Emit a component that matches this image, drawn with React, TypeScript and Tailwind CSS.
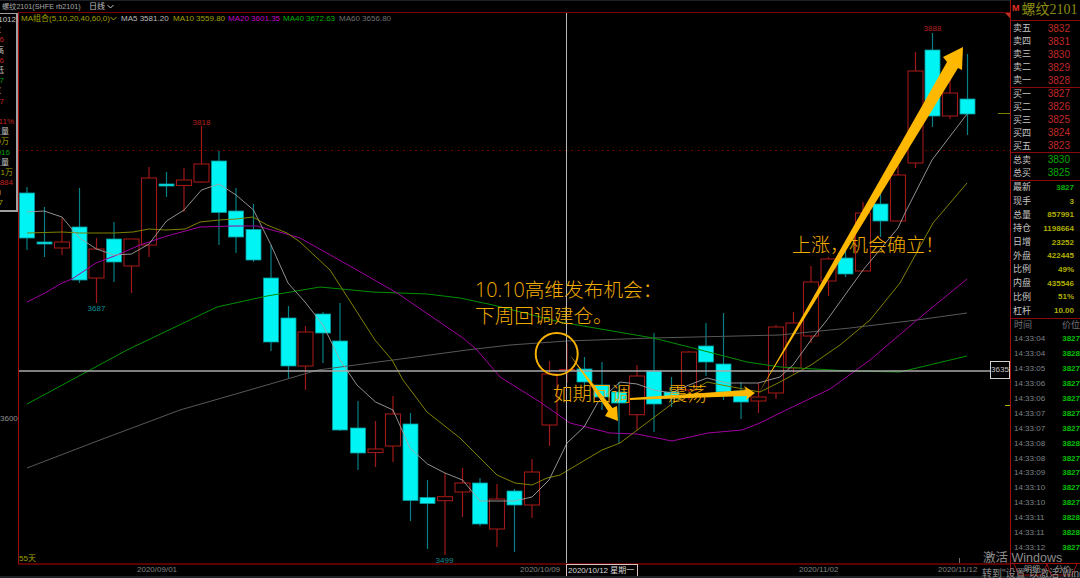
import React from 'react';

// [center x, body top, body bottom, wick top, wick bottom, up?]
const candles: [number, number, number, number, number, boolean][] = [
  [27, 193, 238, 187, 250, false],
  [44.5, 242, 244, 207, 257, false],
  [62, 242, 248, 218, 255, true],
  [79.5, 227, 280, 188, 283, false],
  [96.5, 249, 278, 238, 303, true],
  [114, 239, 262, 222, 282, false],
  [131.5, 239, 266, 239, 293, true],
  [149, 178, 245, 167, 257, true],
  [166.5, 184, 186, 172, 197, false],
  [184, 180, 185.5, 168, 212, true],
  [201.5, 164, 182, 126, 183, true],
  [219, 161, 212.5, 151, 245, false],
  [236, 211, 237, 188, 253, false],
  [253.5, 229.5, 260, 204, 262, false],
  [271, 278, 342, 245, 351, false],
  [288.5, 318, 366, 306, 378, false],
  [305.5, 332, 366, 326, 390, true],
  [323, 314, 333, 312, 363, false],
  [340, 341, 430, 303, 431, false],
  [358, 428, 453, 401, 470, false],
  [375.5, 449, 452.5, 421, 467, true],
  [393, 414, 446, 396, 462, true],
  [410.5, 424, 500.5, 413, 521, false],
  [427.5, 497.5, 503.5, 480, 549, false],
  [445, 496.7, 500.7, 473, 555, true],
  [462.5, 483, 492, 468, 517, true],
  [480, 483, 524, 478, 526, false],
  [497, 499, 529, 484, 547, true],
  [514.5, 491, 505, 489, 552, false],
  [532, 472, 505, 459, 518, true],
  [549.5, 374, 425, 361, 446, true],
  [567, 369.5, 370.5, 343, 383, true],
  [584.5, 369, 382, 357, 387, false],
  [602, 385, 397, 362, 410, false],
  [619, 392, 403, 382, 443, false],
  [637, 376, 414.7, 365, 430, true],
  [654, 371, 404, 333, 432, false],
  [671.5, 392, 398, 377, 407, false],
  [689, 352, 390, 351, 400, true],
  [706, 346, 362, 323, 376, false],
  [723.5, 364, 392, 313, 400, false],
  [741, 391, 402, 382, 419, false],
  [758.5, 397, 401, 383, 413, true],
  [776, 327, 393, 325, 399, true],
  [793.5, 323, 368, 312, 373, true],
  [811, 282, 336, 266, 343, true],
  [828.5, 259, 281, 257, 296, true],
  [845.5, 258, 274, 247, 277, false],
  [863, 213, 271, 202, 271, true],
  [880.5, 204, 221, 190, 237, false],
  [898, 175, 221, 165, 221, true],
  [915.5, 71, 163, 52, 168, true],
  [932.5, 50, 116, 33, 127, false],
  [950, 93, 116, 70, 119, true],
  [967.5, 99, 114, 54, 135, false],
];

const ma5 =
  '27,212 44,211 62,217 79.5,238 96.5,249 114,255 131.5,254 149,244 166.5,221 184,210 201.5,190 219,184 236,195 253.5,210 271,245 288,283 305,302 323,325 340,360 357,385 375.5,402 393,410 410,448 427.5,464 445,473 462.5,480 480,501 497,501 514.5,501 532,497 549,480 567,443 584,427 598,402 620,382 637,384 654,390 671,393 689,385 707,378 727,383 758,383 780,377 793,365 811,340 827,320 845,295 863,270 898,228 905,213 932,160 967,114';
const ma10 =
  '27,233 62,232 79.5,233 114,233 133,232 149,229 166,230 185,229 200,222 219,220 236,219 253,217 267,225 287,233 300,242 330,270 375,340 392,360 403,380 427,412 460,438 497,475 515,483 532,485 547,478 560,475 602,450 620,443 673,403 707,382 727,386 760,392 780,382 811,365 840,345 870,320 900,283 933,223 967,183';
const ma20 =
  '27,302 45,293 62,283 72,279 96,263 117,255 140,245 167,236 200,227 233,226 257,226 283,233 300,238 357,270 397,293 463,338 477,350 500,377 540,402 570,423 610,433 637,434 672,441 708,433 742,430 760,423 780,413 830,389 870,360 917,320 967,279';
const ma40 =
  '27,404 90,370 127,350 217,307 267,296 320,287 373,292 427,294 460,298 493,305 560,322 653,338 693,348 747,362 780,367 850,371 900,372 967,356';
const ma60 =
  '27,468 100,440 180,410 260,387 318,370 393,360 467,350 510,345 567,341 653,338 780,335 850,328 917,320 967,313';

// text, colour, pr: the quote box is cut off, so most values only show their last digits
const leftRows: [string, string, string][] = [
  ['01012', 'text-[#c8c8c8]', 'pr-[0px]'],
  ['盘', 'text-[#c8c8c8]', 'pr-[15px]'],
  ['6', 'text-[#c02020]', 'pr-[12px]'],
  ['高', 'text-[#c8c8c8]', 'pr-[12px]'],
  ['6', 'text-[#c02020]', 'pr-[12px]'],
  ['低', 'text-[#c8c8c8]', 'pr-[12px]'],
  ['7', 'text-[#00a000]', 'pr-[12px]'],
  ['收', 'text-[#c8c8c8]', 'pr-[15px]'],
  ['7', 'text-[#c02020]', 'pr-[12px]'],
  ['', '', ''],
  ['11%', 'text-[#c02020]', 'pr-[2px]'],
  ['主量', 'text-[#c8c8c8]', 'pr-[7px]'],
  ['9万', 'text-[#a0a000]', 'pr-[7px]'],
  ['016', 'text-[#00a000]', 'pr-[6px]'],
  ['主量', 'text-[#c8c8c8]', 'pr-[7px]'],
  ['.1万', 'text-[#a0a000]', 'pr-[3px]'],
  ['7884', 'text-[#c02020]', 'pr-[3px]'],
  ['I', 'text-[#c8c8c8]', 'pr-[15px]'],
  ['7', 'text-[#a0a000]', 'pr-[13px]'],
];

const asks = [
  ['卖五', '3832'],
  ['卖四', '3831'],
  ['卖三', '3830'],
  ['卖二', '3829'],
  ['卖一', '3828'],
];
const bids = [
  ['买一', '3827'],
  ['买二', '3826'],
  ['买三', '3825'],
  ['买四', '3824'],
  ['买五', '3823'],
];
const stats = [
  ['现手', '3'],
  ['总量', '857991'],
  ['持仓', '1198664'],
  ['日增', '23252'],
  ['外盘', '422445'],
  ['比例', '49%'],
  ['内盘', '435546'],
  ['比例', '51%'],
  ['杠杆', '10.00'],
];
const ticks = [
  ['14:33:04', '3827'],
  ['14:33:04', '3828'],
  ['14:33:05', '3827'],
  ['14:33:06', '3827'],
  ['14:33:06', '3827'],
  ['14:33:07', '3827'],
  ['14:33:07', '3827'],
  ['14:33:08', '3828'],
  ['14:33:08', '3827'],
  ['14:33:09', '3827'],
  ['14:33:10', '3827'],
  ['14:33:10', '3827'],
  ['14:33:11', '3828'],
  ['14:33:11', '3828'],
  ['14:33:12', '3827'],
];

const cjk = "font-['Liberation_Sans','Noto_Sans_CJK_SC',sans-serif]";
const note = "absolute font-['Open_Sans','Noto_Sans_CJK_SC',sans-serif] font-light text-[#f2ab00] leading-none whitespace-nowrap";

const Row: React.FC<{ label: string; value: string; tone: string }> = ({ label, value, tone }) => (
  <div className="flex h-[13px] shrink-0 items-center justify-between pl-[2px] pr-[10px]">
    <span className="text-[9px] leading-none text-[#c4c4c4]">{label}</span>
    <span className={`text-[10px] leading-none ${tone}`}>{value}</span>
  </div>
);

const App: React.FC = () => {
  return (
    <div className={`relative flex h-[578px] w-[1080px] flex-col overflow-hidden bg-black ${cjk}`}>
      <div className="flex h-[576px] shrink-0">
        <div className="flex w-[1010px] shrink-0 flex-col">
          {/* top bar */}
          <div className="flex h-[12px] shrink-0 items-center border-t border-[#1c2226] pl-[2px] text-[8px] leading-none text-[#a8a8a8]">
            <span className="w-[87px] whitespace-nowrap text-[7.2px]">螺纹2101(SHFE rb2101)</span>
            <span className="text-[#c0c0c0]">日线</span>
            <svg width="7" height="5" viewBox="0 0 7 5" className="ml-[2px]">
              <path d="M0.5 1 L3.5 4 L6.5 1" fill="none" stroke="#c0c0c0" strokeWidth="1" />
            </svg>
          </div>

          <div className="flex h-[553px] shrink-0">
            {/* clipped quote box */}
            <div className="flex w-[18px] shrink-0 flex-col pt-[1px]">
              <div className="flex h-[199px] shrink-0 flex-col overflow-hidden border-r-2 border-b-2 border-t border-[#a0a0a0] pt-[1px]">
                {leftRows.map(([t, c, pr], i) => (
                  <div key={i} className={`flex h-[10.2px] shrink-0 items-center justify-end whitespace-nowrap text-[8px] leading-none ${c} ${pr}`}>
                    {t}
                  </div>
                ))}
              </div>
              <div className="mt-[203px] text-[8px] leading-none text-[#909090]">3600</div>
            </div>

            {/* chart */}
            <div className="relative w-[992px] shrink-0 border-l border-t border-l-[#a01010] border-t-[#7a0000] border-b-2 border-b-[#5c0000]">
              <div className="flex h-[11px] items-center pl-[2px] text-[8px] leading-none whitespace-nowrap">
                <span className="w-[89px] text-[#a0a000]">MA组合(5,10,20,40,60,0)</span>
                <svg width="7" height="5" viewBox="0 0 7 5" className="mr-[4px]">
                  <path d="M0.5 1 L3.5 4 L6.5 1" fill="none" stroke="#a0a000" strokeWidth="1" />
                </svg>
                <span className="w-[52px] text-[#b8b8b8]">MA5 3581.20</span>
                <span className="w-[55px] text-[#a0a000]">MA10 3559.80</span>
                <span className="w-[55px] text-[#c000c0]">MA20 3601.35</span>
                <span className="w-[56px] text-[#00b000]">MA40 3672.63</span>
                <span className="text-[#707070]">MA60 3656.80</span>
              </div>

              <svg
                className="absolute left-0 top-0 h-[550px] w-[991px]"
                viewBox="19 13 991 550"
                fontFamily="Liberation Sans"
              >
                <line x1="19" y1="150.5" x2="1010" y2="150.5" stroke="#700000" strokeDasharray="2 4" />
                {candles.map(([x, t, b, wt, wb, up], i) => (
                  <g key={i}>
                    <line x1={x} y1={wt} x2={x} y2={wb} stroke={up ? '#a01818' : '#067f85'} strokeWidth="1.2" />
                    {up ? (
                      <rect x={x - 7.5} y={t} width="15" height={b - t} fill="#000" stroke="#a01818" strokeWidth="1.1" />
                    ) : (
                      <rect x={x - 7.5} y={t} width="15" height={b - t} fill="#00f4f4" stroke="#089a9e" strokeWidth="0.8" />
                    )}
                  </g>
                ))}
                <polyline points={ma60} fill="none" stroke="#585858" />
                <polyline points={ma40} fill="none" stroke="#009000" />
                <polyline points={ma20} fill="none" stroke="#a000a0" />
                <polyline points={ma10} fill="none" stroke="#808000" />
                <polyline points={ma5} fill="none" stroke="#a0a0a0" strokeWidth="0.9" />

                <line x1="566.5" y1="13" x2="566.5" y2="563" stroke="#b8b8b8" />
                <line x1="19" y1="371" x2="990" y2="371" stroke="#a8a8a8" strokeWidth="1.4" />
                <line x1="998" y1="113.5" x2="1010" y2="113.5" stroke="#808000" />
                <line x1="1005" y1="405.5" x2="1010" y2="405.5" stroke="#b0b000" />
                <line x1="959.5" y1="558" x2="959.5" y2="563" stroke="#707070" />
                <polygon points="1005,13 1010,13 1010,18" fill="#c03020" />

                <text x="201.5" y="125" textAnchor="middle" fontSize="8" fill="#b02020">3818</text>
                <text x="932.5" y="31" textAnchor="middle" fontSize="8" fill="#b02020">3888</text>
                <text x="96.5" y="311" textAnchor="middle" fontSize="8" fill="#0a8f96">3687</text>
                <text x="444.5" y="563" textAnchor="middle" fontSize="8" fill="#0a8f96">3499</text>
                <text x="19" y="561" fontSize="8" fill="#a0a000" fontFamily="Liberation Sans, Noto Sans CJK SC">55天</text>

                {/* annotations */}
                <circle cx="556.7" cy="354" r="21" fill="none" stroke="#f5b000" strokeWidth="2" />
                <polygon points="757,396 947,62 943,57 963,47 962,70 958,68" fill="#ffb800" />
                <polygon points="570,355 608,411 605,416 618,421 617,406 612.5,408" fill="#ffb800" />
                <polygon points="630,398 746,390 744,386 755,393 746,400 747,396 630,400" fill="#ffb800" />
              </svg>

              <div className="absolute left-[971px] top-[348px] flex h-[18px] w-[20px] items-center justify-center border border-[#d0d0d0] bg-black text-[8px] leading-none text-[#c8c8c8]">
                3635
              </div>

              <div className={`${note} left-[456px] top-[267px] text-[19.7px]`}>10.10高维发布机会：</div>
              <div className={`${note} left-[456px] top-[293px] text-[19.7px]`}>下周回调建仓。</div>
              <div className={`${note} left-[534px] top-[371px] text-[19.4px]`}>如期回调</div>
              <div className={`${note} left-[649px] top-[371px] text-[19.4px]`}>震荡</div>
              <div className={`${note} left-[773px] top-[223px] text-[19px]`}>上涨，机会确立！</div>
            </div>
          </div>

          {/* date axis */}
          <div className="relative h-[11px] shrink-0 text-[8px] leading-none text-[#808080]">
            <span className="absolute left-[137px] top-[1px]">2020/09/01</span>
            <span className="absolute left-[520px] top-[1px]">2020/10/09</span>
            <span className="absolute left-[566px] top-[-1px] flex h-[12px] w-[72px] items-center whitespace-nowrap border-x border-t border-[#e0c0c0] bg-black pl-[1px] text-[#d8d8d8]">
              2020/10/12 星期一
            </span>
            <span className="absolute left-[799px] top-[1px]">2020/11/02</span>
            <span className="absolute left-[938px] top-[1px]">2020/11/12</span>
          </div>
        </div>

        {/* right panel */}
        <div className="flex w-[70px] shrink-0 flex-col overflow-hidden border-l border-[#a01010]">
          <div className="flex h-[21px] shrink-0 items-center border-b border-[#8a0a0a] pl-[1px]">
            <span className="self-start pt-[4px] text-[9px] font-bold leading-none text-[#e03020]">M</span>
            <span className="ml-[2px] whitespace-nowrap font-['Liberation_Serif','Noto_Sans_CJK_SC',serif] text-[14px] leading-none text-[#8c8c10]">螺纹2101</span>
          </div>
          <div className="flex h-[67px] shrink-0 flex-col border-b border-[#8a0a0a] pt-[1px]">
            {asks.map(([l, v]) => (
              <Row key={l} label={l} value={v} tone="text-[#c02828]" />
            ))}
          </div>
          <div className="flex h-[65px] shrink-0 flex-col justify-center border-b border-[#8a0a0a]">
            {bids.map(([l, v]) => (
              <Row key={l} label={l} value={v} tone="text-[#c02828]" />
            ))}
          </div>
          <div className="flex h-[28px] shrink-0 flex-col justify-center border-b border-[#8a0a0a]">
            <Row label="总卖" value="3830" tone="text-[#00a800]" />
            <Row label="总买" value="3825" tone="text-[#00a800]" />
          </div>
          <div className="flex h-[138px] shrink-0 flex-col border-b border-[#8a0a0a]">
            <div className="flex h-[13.7px] items-center justify-between pl-[2px] pr-[6px]">
              <span className="text-[9px] leading-none text-[#c4c4c4]">最新</span>
              <span className="text-[8px] font-bold leading-none text-[#00b000]">3827</span>
            </div>
            {stats.map(([l, v], i) => (
              <div key={i} className="flex h-[13.7px] items-center justify-between pl-[2px] pr-[6px]">
                <span className="text-[9px] leading-none text-[#c4c4c4]">{l}</span>
                <span className="text-[8px] font-bold leading-none text-[#b0b000]">{v}</span>
              </div>
            ))}
          </div>
          <div className="flex h-[13px] shrink-0 items-center pl-[3px] text-[9px] leading-none text-[#70767c]">
            <span className="w-[51px]">时间</span>
            <span className="whitespace-nowrap">价位</span>
          </div>
          {ticks.map(([t, p], i) => (
            <div key={i} className="flex h-[14.9px] shrink-0 items-center whitespace-nowrap pl-[3px] text-[8px] leading-none">
              <span className="w-[51px] text-[#7c8288]">{t}</span>
              <span className="font-bold text-[#00c000]">{p}</span>
            </div>
          ))}
          {/* detail tabs */}
          <div className="relative mt-[8px] flex h-[12px] shrink-0 gap-[5px] border-t border-[#a01010] pl-[13px] text-[8px] leading-none text-[#a0a0a0]">
            <span className="pt-[2px] pr-[10px]">明细</span>
            <span className="pt-[2px]">分价</span>
            <svg className="absolute left-0 top-0 h-[12px] w-[69px]" viewBox="0 0 69 12">
              <polyline points="3,0 8,11 31,11 36,0 40,11 61,11 66,0" fill="none" stroke="#a01010" />
            </svg>
          </div>
        </div>
      </div>
      <div className="h-[2px] shrink-0 bg-[#1c2226]" />

      {/* activation watermark */}
      <div className="absolute left-[983px] top-[552px] whitespace-nowrap text-[12.5px] leading-none text-[#8c8c8c]">
        激活 Windows
      </div>
      <div className="absolute left-[982px] top-[569px] whitespace-nowrap text-[10px] leading-none text-[#8c8c8c]">
        转到"设置"以激活 Windows。
      </div>
    </div>
  );
};

export default App;
